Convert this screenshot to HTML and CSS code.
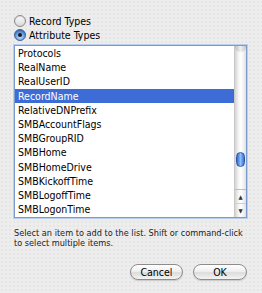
FILE: index.html
```html
<!DOCTYPE html>
<html lang="en">
<head>
    <meta charset="UTF-8">
    <title>Add Attribute</title>
    <link rel="stylesheet" href="styles.css">
</head>
<body>
    <div class="dialog">
        <div class="radios">
            <label class="radio"><span class="dot"></span>Record Types</label>
            <label class="radio"><span class="dot on"></span>Attribute Types</label>
        </div>

        <div class="list">
            <ul class="items">
                <li>Protocols</li>
                <li>RealName</li>
                <li>RealUserID</li>
                <li class="selected">RecordName</li>
                <li>RelativeDNPrefix</li>
                <li>SMBAccountFlags</li>
                <li>SMBGroupRID</li>
                <li>SMBHome</li>
                <li>SMBHomeDrive</li>
                <li>SMBKickoffTime</li>
                <li>SMBLogoffTime</li>
                <li>SMBLogonTime</li>
            </ul>
            <div class="scrollbar">
                <div class="cap"></div>
                <div class="thumb"></div>
                <div class="arrows">
                    <span class="arrow">&#9650;</span>
                    <span class="arrow">&#9660;</span>
                </div>
            </div>
        </div>

        <p class="help">Select an item to add to the list. Shift or command-click to select multiple items.</p>

        <div class="buttons">
            <button class="pill">Cancel</button>
            <button class="pill">OK</button>
        </div>
    </div>
</body>
</html>
```

FILE: styles.css
```css
/* General Styling */
body {
    margin: 0;
    width: 262px;
    height: 293px;
    overflow: hidden;
    font-family: 'DejaVu Sans', sans-serif;
    font-stretch: condensed;
    color: #000;
    background-color: #ededed;
    background-image: radial-gradient(circle, #dcdcdc 0.6px, transparent 0.8px);
    background-size: 4px 4px;
}

.dialog {
    display: flex;
    flex-direction: column;
    padding: 14px 15px 0 14px;
}

/* Radio buttons */
.radios {
    display: flex;
    flex-direction: column;
}

.radio {
    display: flex;
    align-items: center;
    height: 14px;
    font-size: 10.5px;
    gap: 3px;
}

.dot {
    width: 10px;
    height: 10px;
    border-radius: 50%;
    border: 1px solid #8a8a8a;
    background: linear-gradient(#fdfdfd, #d8d8d8);
    box-shadow: inset 0 1px 1px rgba(0, 0, 0, 0.15);
    display: flex;
    align-items: center;
    justify-content: center;
}

.dot.on {
    border-color: #3c5f9c;
    background: radial-gradient(circle at 50% 70%, #bfe0ff, #5c8fd8 60%, #2d5ab0);
}

.dot.on::after {
    content: "";
    width: 4px;
    height: 4px;
    border-radius: 50%;
    background: #1a1a1a;
}

/* List */
.list {
    display: flex;
    margin-top: 3px;
    height: 171px;
    border: 1px solid #7b9bd0;
    box-shadow: 0 0 0 1px #b9cdec;
    background: #fff;
}

.items {
    flex: 1;
    list-style: none;
    margin: 0;
    padding: 0;
    font-size: 10.5px;
}

.items li {
    height: 14.2px;
    line-height: 14px;
    padding-left: 3px;
}

.items li.selected {
    background: #3d6cd6;
    color: #fff;
}

/* Scrollbar */
.scrollbar {
    width: 11px;
    display: flex;
    flex-direction: column;
    background: linear-gradient(90deg, #d4d4d4, #f7f7f7 35%, #ffffff 55%, #e2e2e2);
    border-left: 1px solid #c8c8c8;
}

.cap {
    height: 6px;
    border-radius: 0 0 5px 5px;
    background: linear-gradient(90deg, #bdbdbd, #efefef 50%, #c6c6c6);
}

.thumb {
    margin-top: 100px;
    margin-left: 1px;
    width: 9px;
    height: 15px;
    border-radius: 5px;
    border: 1px solid #2b56a8;
    box-sizing: border-box;
    background: linear-gradient(90deg, #3466c6, #8fc0ff 50%, #3c70d2);
}

.arrows {
    margin-top: auto;
    display: flex;
    flex-direction: column;
    border-top: 1px solid #bdbdbd;
}

.arrow {
    height: 13px;
    font-size: 6px;
    line-height: 13px;
    text-align: center;
    color: #333;
}

.arrow + .arrow {
    border-top: 1px solid #d0d0d0;
}

/* Help text */
.help {
    margin: 10px 0 0;
    max-width: 232px;
    font-size: 9.1px;
    line-height: 10px;
    color: #222;
}

/* Buttons */
.buttons {
    display: flex;
    justify-content: flex-end;
    gap: 10px;
    margin-top: 16px;
}

.pill {
    font-family: inherit;
    font-stretch: condensed;
    font-size: 10.5px;
    height: 16px;
    padding: 0;
    border-radius: 8px;
    border: 1px solid #8c8c8c;
    background: linear-gradient(#ffffff, #f0f0f0 45%, #dcdcdc 55%, #f4f4f4);
    box-shadow: 0 1px 1px rgba(0, 0, 0, 0.15);
    color: #000;
}

.pill:first-child {
    width: 53px;
}

.pill:last-child {
    width: 54px;
}
```
